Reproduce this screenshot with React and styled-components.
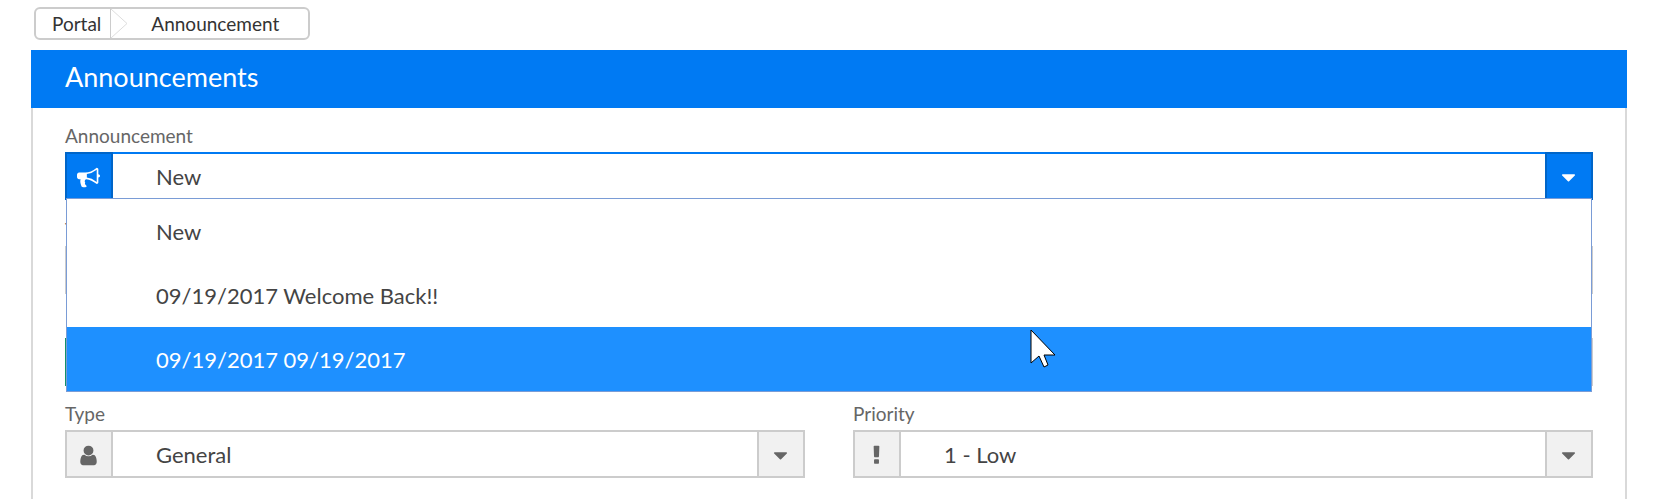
import { useState } from "react";
import styled, { createGlobalStyle } from "styled-components";

const ANNOUNCEMENTS = [
	"New",
	"09/19/2017 Welcome Back!!",
	"09/19/2017 09/19/2017",
];

const ICONS = {
	bullhorn:
		"M1664 640q53 0 90.5 37.5t37.5 90.5-37.5 90.5-90.5 37.5v384q0 52-38 90t-90 38q-417-347-812-380-58 19-91 66t-31 100.5 40 92.5q-20 33-23 65.5t6 58 33.5 55 48 50 61.5 50.5q-29 58-111.5 83t-168.5 11.5-132-55.5q-7-23-29.5-87.5t-32-94.5-23-89-15-101 3.5-98.5 22-110.5h-122q-66 0-113-47t-47-113v-192q0-66 47-113t113-47h480q435 0 896-384 52 0 90 38t38 90v384zm-128 604v-954q-394 302-768 343v270q377 42 768 341z",
	user: "M1536 1399q0 109-62.5 187t-150.5 78h-854q-88 0-150.5-78t-62.5-187q0-85 8.5-160.5t31.5-152 58.5-131 94-89 134.5-34.5q131 128 313 128t313-128q76 0 134.5 34.5t94 89 58.5 131 31.5 152 8.5 160.5zm-256-887q0 159-112.5 271.5t-271.5 112.5-271.5-112.5-112.5-271.5 112.5-271.5 271.5-112.5 271.5 112.5 112.5 271.5z",
	exclamation:
		"M1088 1248v224q0 26-19 45t-45 19h-256q-26 0-45-19t-19-45v-224q0-26 19-45t45-19h256q26 0 45 19t19 45zm30-1056l-28 768q-1 26-20.5 45t-45.5 19h-256q-26 0-45.5-19t-20.5-45l-28-768q-1-26 17.5-45t44.5-19h320q26 0 44.5 19t17.5 45z",
	caret:
		"M1408 704q0 26-19 45l-448 448q-19 19-45 19t-45-19l-448-448q-19-19-19-45t19-45 45-19h896q26 0 45 19t19 45z",
};

const Icon = ({ name }) => (
	<svg width="23" height="23" viewBox="0 0 1792 1792" aria-hidden="true">
		<path fill="currentColor" d={ICONS[name]} />
	</svg>
);

const SelectField = ({ id, label, icon, options }) => (
	<Field>
		<Label htmlFor={id}>{label}</Label>
		<Control>
			<Addon>
				<Icon name={icon} />
			</Addon>
			<Select id={id}>
				{options.map((option) => (
					<option key={option}>{option}</option>
				))}
			</Select>
			<Addon $end>
				<Icon name="caret" />
			</Addon>
		</Control>
	</Field>
);

const AnnouncementPicker = () => {
	const [open, setOpen] = useState(true);
	const [value, setValue] = useState(ANNOUNCEMENTS[0]);
	const [active, setActive] = useState(2);

	const toggle = (e) => {
		e.preventDefault();
		setOpen(!open);
	};

	const pick = (option) => {
		setValue(option);
		setOpen(false);
	};

	return (
		<PickerField>
			<Label htmlFor="announcement">Announcement</Label>
			<Control $active>
				<Addon $active>
					<Icon name="bullhorn" />
				</Addon>
				<Select
					id="announcement"
					value={value}
					onMouseDown={toggle}
					onChange={(e) => setValue(e.target.value)}
				>
					{ANNOUNCEMENTS.map((option) => (
						<option key={option}>{option}</option>
					))}
				</Select>
				<Addon $active $end>
					<Icon name="caret" />
				</Addon>
				{open && (
					<Menu role="listbox" aria-label="Announcement">
						{ANNOUNCEMENTS.map((option, index) => (
							<MenuItem
								key={option}
								role="option"
								aria-selected={option === value}
								$active={index === active}
								onMouseEnter={() => setActive(index)}
								onClick={() => pick(option)}
							>
								{option}
							</MenuItem>
						))}
						<Pointer width="26" height="40" viewBox="0 0 26 40" aria-hidden="true">
							<path
								d="M1 1V34L9 27L14 38L18 36L14 26H25Z"
								fill="#fff"
								stroke="#000"
							/>
						</Pointer>
					</Menu>
				)}
			</Control>
		</PickerField>
	);
};

export default function App() {
	return (
		<>
			<GlobalStyle />
			<Page>
				<Breadcrumb aria-label="Breadcrumb">
					<Crumb href="#portal">Portal</Crumb>
					<Divider width="18" height="29" viewBox="0 0 18 29" aria-hidden="true">
						<path d="M0.5 0V29" stroke="#ccc" fill="none" />
						<path d="M1 0L17 14.5L1 29" stroke="#ddd" fill="none" />
					</Divider>
					<Crumb href="#announcement" $last>
						Announcement
					</Crumb>
				</Breadcrumb>
				<Panel>
					<PanelTitle>Announcements</PanelTitle>
					<Form>
						<AnnouncementPicker />
						<Field>
							<Label htmlFor="title">Title</Label>
							<Control>
								<Input id="title" />
							</Control>
						</Field>
						<Field>
							<Label htmlFor="date">Date</Label>
							<Control>
								<Addon $start />
								<Input id="date" />
							</Control>
						</Field>
						<Columns>
							<SelectField
								id="type"
								label="Type"
								icon="user"
								options={["General"]}
							/>
							<SelectField
								id="priority"
								label="Priority"
								icon="exclamation"
								options={["1 - Low"]}
							/>
						</Columns>
					</Form>
				</Panel>
			</Page>
		</>
	);
}

const GlobalStyle = createGlobalStyle`
	* {
		box-sizing: border-box;
	}

	body {
		margin: 0;
		background: #fff;
		color: #444;
		font-family: Lato, "Liberation Sans", sans-serif;
	}
`;

const Page = styled.main`
	display: flex;
	flex-direction: column;
	align-items: flex-start;
	gap: 10px;
	min-height: 100vh;
	padding: 7px 31px 0;
`;

const Breadcrumb = styled.nav`
	display: flex;
	align-items: center;
	margin-left: 3px;
	border: 2px solid #ccc;
	border-radius: 6px;
`;

const Crumb = styled.a`
	padding: ${(props) => (props.$last ? "0 29px 0 23px" : "0 9px 0 16px")};
	color: #333;
	font-size: 19px;
	line-height: 29px;
	text-decoration: none;
`;

const Divider = styled.svg`
	display: block;
`;

const Panel = styled.section`
	display: flex;
	flex: 1;
	flex-direction: column;
	align-self: stretch;
`;

const PanelTitle = styled.h1`
	margin: 0;
	padding: 0 34px 4px;
	background: #007af3;
	color: #fff;
	font-size: 27px;
	font-weight: 400;
	line-height: 54px;
`;

const Form = styled.form`
	display: flex;
	flex: 1;
	flex-direction: column;
	gap: 16px;
	padding: 16px 32px 20px;
	border: solid #d9d9d9;
	border-width: 0 2px;
`;

const Columns = styled.div`
	display: grid;
	grid-template-columns: 1fr 1fr;
	gap: 48px;
`;

const Field = styled.div`
	display: flex;
	flex-direction: column;
	gap: 4px;
`;

const PickerField = styled(Field)`
	margin-bottom: 2px;
`;

const Label = styled.label`
	color: #666;
	font-size: 19px;
	line-height: 24px;
`;

const Control = styled.div`
	position: relative;
	display: flex;
	height: 48px;
	border: 2px solid ${(props) => (props.$active ? "#007af3" : "#ccc")};
`;

const Addon = styled.span`
	display: flex;
	flex: none;
	align-items: center;
	justify-content: center;
	width: 48px;
	margin: ${(props) => (props.$end ? "-2px -2px -2px 0" : "-2px 0 -2px -2px")};
	padding: 2px 2px 0 0;
	border: 2px solid ${(props) => (props.$active ? "#0065c8" : "#ccc")};
	background: ${(props) => (props.$active ? "#007af3" : "#f1f1f1")};
	color: ${(props) => (props.$active ? "#fff" : "#666")};
	pointer-events: none;

	${(props) =>
		props.$start &&
		`
		border-color: #12936b;
		background: #16a87b;
	`}
`;

const Select = styled.select`
	flex: 1;
	min-width: 0;
	padding: 1px 43px 0;
	border: 0;
	outline: 0;
	background: transparent;
	color: #444;
	font: inherit;
	font-size: 22px;
	appearance: none;
`;

const Input = styled.input`
	flex: 1;
	min-width: 0;
	padding: 0 43px;
	border: 0;
	outline: 0;
	background: transparent;
	color: #444;
	font: inherit;
	font-size: 22px;
`;

const Menu = styled.ul`
	position: absolute;
	z-index: 1;
	top: 44px;
	right: -1px;
	left: -1px;
	margin: 0;
	padding: 0;
	border: 1px solid #7a9cd6;
	background: #fff;
	list-style: none;
`;

const MenuItem = styled.li`
	padding: 2px 89px 0;
	background: ${(props) => (props.$active ? "#1e90ff" : "#fff")};
	color: ${(props) => (props.$active ? "#fff" : "#444")};
	font-size: 22px;
	line-height: 62px;
	cursor: default;
`;

const Pointer = styled.svg`
	position: absolute;
	top: 130px;
	left: calc(63% + 3px);
	pointer-events: none;
`;
